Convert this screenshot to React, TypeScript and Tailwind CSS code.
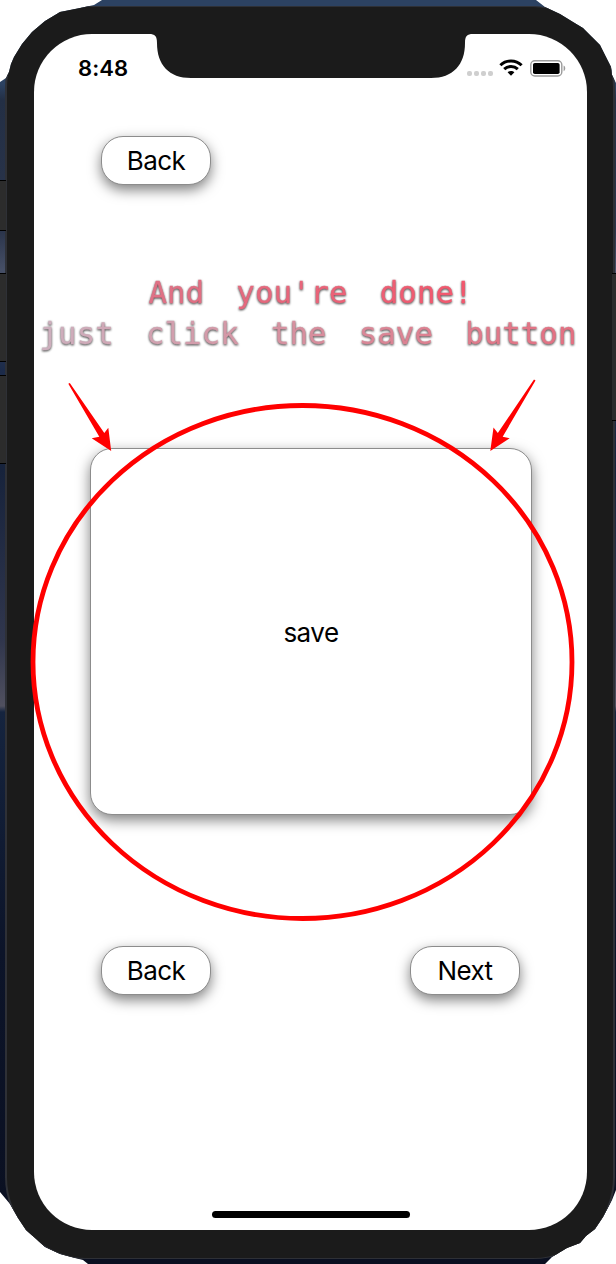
import React from "react";

function Wifi() {
  return (
    <svg width="24" height="18" viewBox="0 0 24 18" fill="none" stroke="#000" strokeWidth="3">
      <path d="M1.4 6.3C7.2 .6 16.8 .6 22.6 6.3" />
      <path d="M5.2 10.2c3.8-3.6 9.8-3.6 13.6 0" />
      <path d="M8.6 13.3c1.8-1.8 5-1.8 6.8 0L12 16.8z" fill="#000" stroke="none" />
    </svg>
  );
}

function Battery() {
  return (
    <svg width="36" height="17" viewBox="0 0 36 17">
      <rect x=".8" y=".8" width="31" height="15.2" rx="4" fill="none" stroke="#9b9b9b" strokeWidth="1.4" />
      <rect x="3" y="3" width="26.6" height="11" rx="1.8" />
      <path d="M33.6 5.6c2.2.8 2.2 4.9 0 5.7z" fill="#9b9b9b" />
    </svg>
  );
}

function StatusBar() {
  return (
    <div className="flex h-[68px] items-center justify-between pr-[21px] pl-[44px]">
      <span className="text-[22px] font-semibold tracking-[0.1px] text-black">8:48</span>
      <div className="flex items-center">
        <div className="mt-[11px] mr-[6px] flex gap-[2px]">
          {[0, 1, 2, 3].map((dot) => (
            <span key={dot} className="size-[5px] rounded-[2px] bg-[#cfcfcf]" />
          ))}
        </div>
        <Wifi />
        <span className="w-[7px]" />
        <Battery />
      </div>
    </div>
  );
}

function PillButton({ label }: { label: string }) {
  return (
    <button className="h-[49px] w-[110px] rounded-[22px] border-[1.5px] border-[#8c8c8c] bg-white text-[26px] leading-none tracking-[-0.6px] text-black shadow-[0_5px_13px_rgba(0,0,0,0.5)]">
      {label}
    </button>
  );
}

function Annotations() {
  return (
    <svg className="pointer-events-none absolute inset-0" width="616" height="1264" viewBox="0 0 616 1264">
      <ellipse cx="302.5" cy="662" rx="269.5" ry="256.5" fill="none" stroke="#ff0000" strokeWidth="4.8" />
      <path d="M68.3 383.8 69.8 383 104.3 433 108.3 427.8 111.2 451 91.7 438.2 99.3 436.7z" fill="#ff0000" />
      <path d="M535.5 380.5 534 379.6 497.8 433 493.5 427.6 490.3 451 509.7 438.3 502.7 436.7z" fill="#ff0000" />
    </svg>
  );
}

export default function App() {
  return (
    <div className="relative h-[1264px] w-[616px] overflow-hidden bg-white font-['Inter','Liberation_Sans',sans-serif]">
      <div className="flex h-full bg-[linear-gradient(#2c4262_0px,#2c4262_84px,#232f45_100px,#2a344b_230px,#464f66_270px,#1c2b4a_370px,#17233c_470px,#30364d_640px,#50505f_706px,#15243f_712px,#0c1429_950px,#0a0f20_1264px)] px-[5px] pt-[6px] pb-[5px] [clip-path:polygon(102px_0,94px_5px,80px_8px,60px_12px,45px_21px,32px_32px,22px_44px,14px_57px,11px_64px,9px_72px,6px_78px,0_82px,0_1192px,10px_1204px,18px_1218px,26px_1230px,35px_1238px,45px_1247px,60px_1254px,75px_1258px,83px_1260px,88px_1264px,545px_1264px,552px_1257px,567px_1248px,580px_1243px,586px_1236px,595px_1229px,603px_1217px,612px_1200px,616px_1190px,616px_83px,612px_75px,611px_67px,606px_57px,600px_45px,592px_37px,583px_28px,573px_22px,560px_14px,545px_7px,536px_0)]">
        <div className="flex w-[610px] shrink-0 rounded-[82px] border-x-2 border-y border-[#2e3036] bg-[#1b1b1b] pt-[27px] pr-[26px] pb-[28px] pl-[27px]">
          <div className="relative flex w-[553px] flex-col rounded-[58px] bg-white">
            <StatusBar />
            <svg className="absolute top-0 left-[115px]" width="324" height="45" viewBox="0 0 324 45">
              <path d="M0 0C6 0 8 2 8 9C8 31 20 44 42 44H282C304 44 316 31 316 9C316 2 318 0 324 0z" fill="#1b1b1b" />
            </svg>
            <div className="mt-[34px] ml-[67px] flex">
              <PillButton label="Back" />
            </div>
            <h1 className="mt-[87px] flex flex-col items-center text-center font-['DejaVu_Sans_Mono','Liberation_Mono',monospace] text-[30.8px] leading-[41px] font-normal whitespace-nowrap [word-spacing:13.7px] [-webkit-text-stroke:0.3px_transparent] [filter:drop-shadow(0_1.5px_0.8px_rgba(0,0,0,0.75))]">
              <span className="bg-[linear-gradient(90deg,#de7286,#f4566c)] bg-clip-text text-transparent">And you&apos;re done!</span>
              <span className="mr-[5px] bg-[linear-gradient(90deg,#cdb0be,#d78e9d_50%,#e56f81)] bg-clip-text text-transparent">just click the save button</span>
            </h1>
            <button className="mt-[94px] ml-[56px] h-[367px] w-[442px] rounded-[22px] border-[1.5px] border-[#8c8c8c] bg-white pt-[1px] text-[26px] tracking-[-0.5px] text-black shadow-[0_5px_14px_rgba(0,0,0,0.5)]">
              save
            </button>
            <div className="mt-[131px] mr-[67px] ml-[67px] flex justify-between">
              <PillButton label="Back" />
              <PillButton label="Next" />
            </div>
            <div className="mt-auto mb-[12px] h-[7px] w-[198px] self-center rounded-full bg-black" />
          </div>
        </div>
      </div>
      <span className="absolute top-[180px] left-0 h-[51px] w-[6px] border-y border-black bg-[#2c2c2c]" />
      <span className="absolute top-[273px] left-0 h-[89px] w-[6px] border-y border-black bg-[#2c2c2c]" />
      <span className="absolute top-[375px] left-0 h-[89px] w-[6px] border-y border-black bg-[#2c2c2c]" />
      <span className="absolute top-[273px] right-0 h-[148px] w-[4px] border-y border-black bg-[#2c2c2c]" />
      <Annotations />
    </div>
  );
}
